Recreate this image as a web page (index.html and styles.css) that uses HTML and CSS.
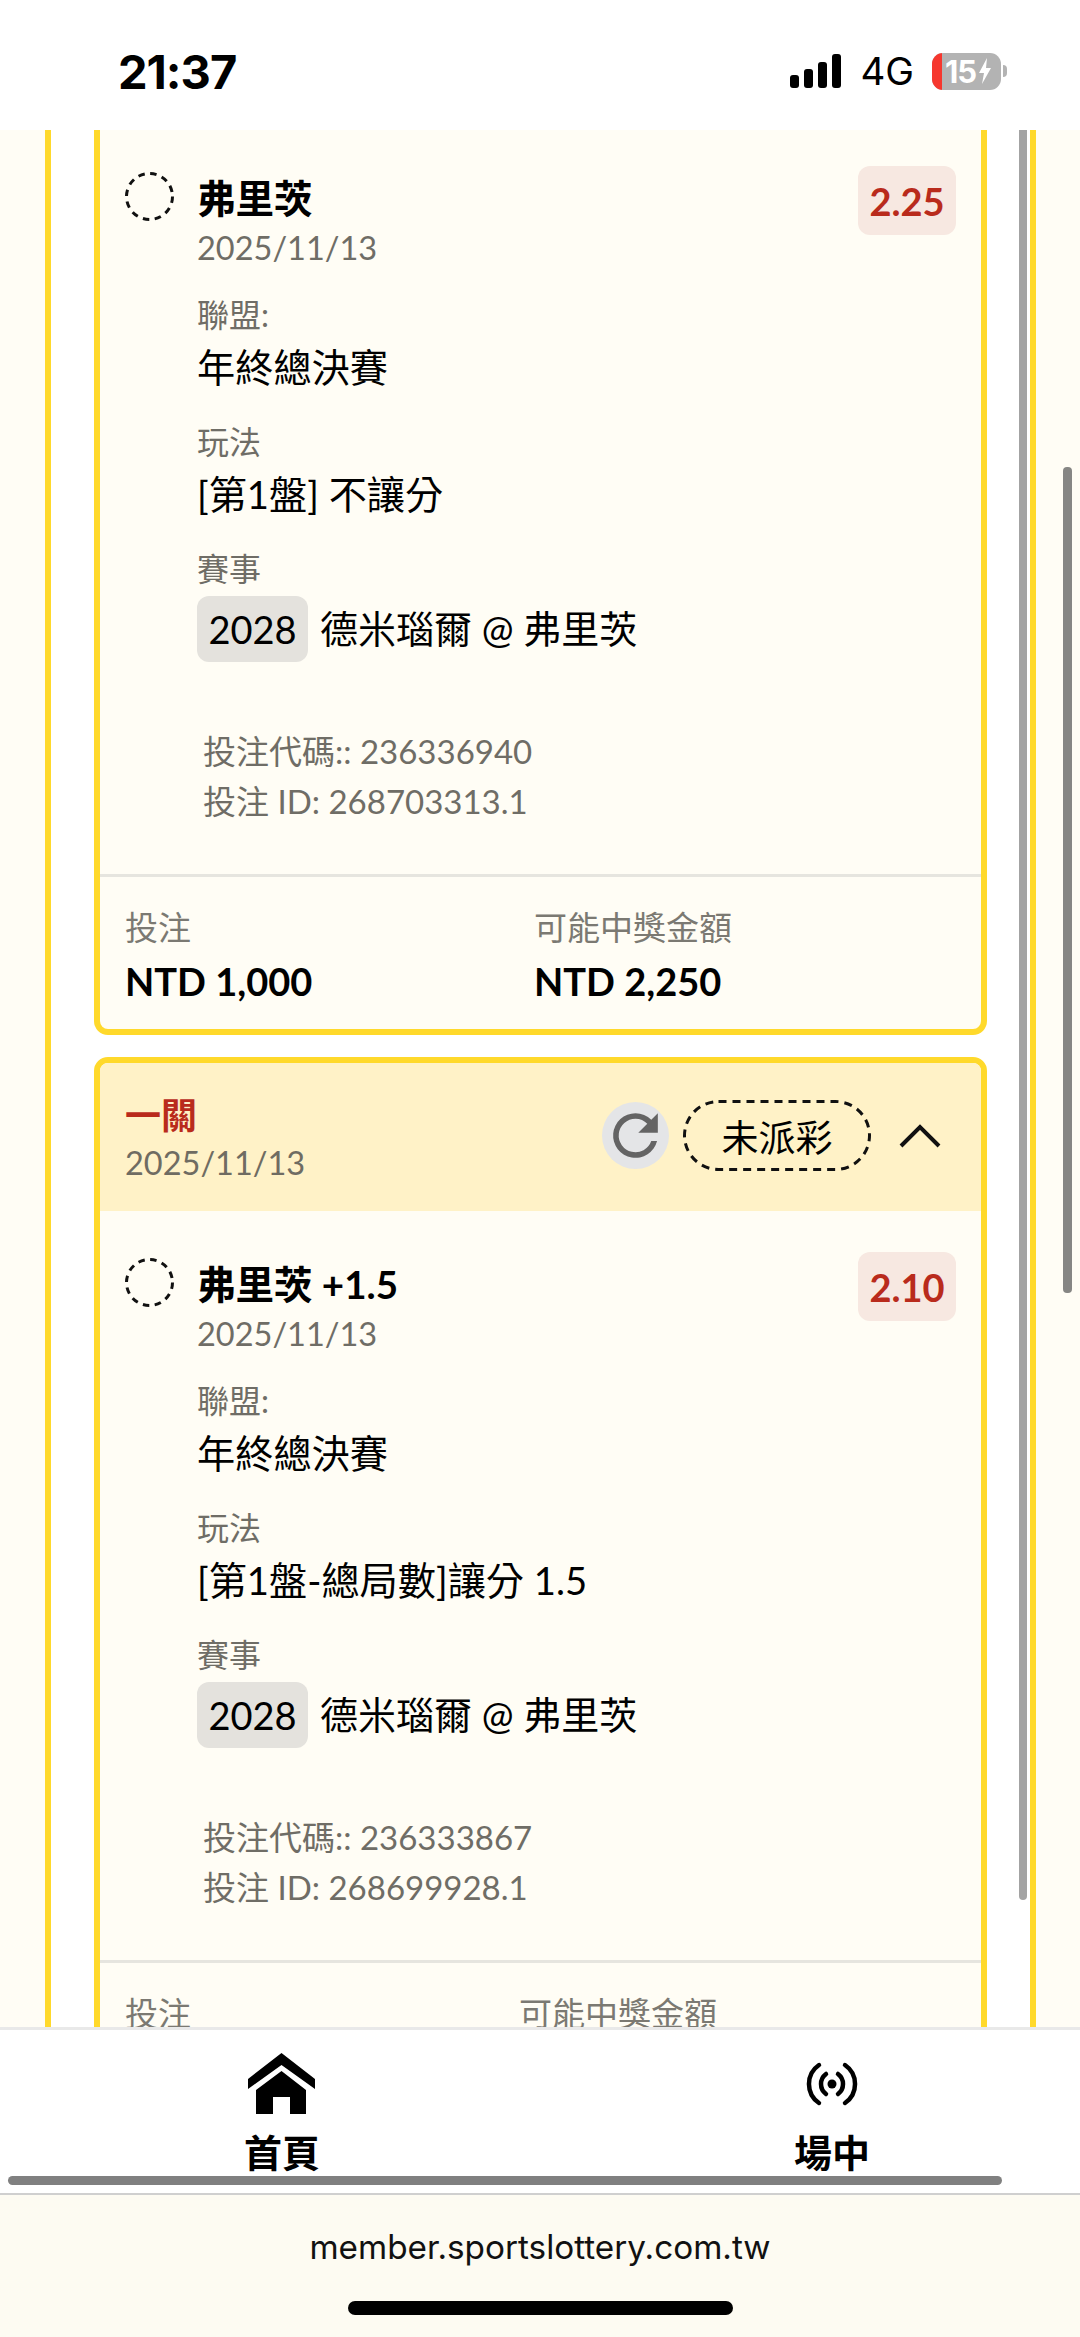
FILE: index.html
```html
<!DOCTYPE html>
<html lang="zh-Hant">
<head>
<meta charset="utf-8">
<title>member.sportslottery.com.tw</title>
<link rel="stylesheet" href="styles.css">
</head>
<body>
<div class="screen">
  <header class="status">
    <span class="time">21:37</span>
    <div class="status-right">
      <div class="signal"><i class="s1"></i><i class="s2"></i><i class="s3"></i><i class="s4"></i></div>
      <span class="net">4G</span>
      <div class="battery">
        <div class="batt-body">
          <span class="batt-red"></span>
          <span class="batt-num">15</span>
          <svg class="bolt" viewBox="0 0 14 26"><path d="M9 0 1 15h5l-2 11 9-16H8z" fill="#fff"/></svg>
        </div>
        <span class="batt-nub"></span>
      </div>
    </div>
  </header>

  <main class="viewport">
    <div class="panel">
      <section class="card card-cut">
        <div class="body body-first">
          <div class="sel">
            <svg class="ring" viewBox="0 0 49 49" width="49" height="49"><circle cx="24.5" cy="24.5" r="23" fill="none" stroke="#111" stroke-width="3" stroke-dasharray="6.5 5.54"/></svg>
            <div class="sel-text">
              <div class="team">弗里茨</div>
              <div class="date">2025/11/13</div>
            </div>
            <span class="odds">2.25</span>
          </div>
          <div class="fields">
            <div class="label">聯盟:</div>
            <div class="value">年終總決賽</div>
            <div class="label">玩法</div>
            <div class="value">[第1盤] 不讓分</div>
            <div class="label">賽事</div>
            <div class="match"><span class="tag">2028</span><span class="match-name">德米瑙爾 @ 弗里茨</span></div>
          </div>
          <div class="ids">
            <div>投注代碼:: 236336940</div>
            <div>投注 ID: 268703313.1</div>
          </div>
        </div>
        <div class="foot foot-a">
          <div><div class="foot-label">投注</div><div class="foot-val">NTD 1,000</div></div>
          <div><div class="foot-label">可能中獎金額</div><div class="foot-val">NTD 2,250</div></div>
        </div>
      </section>

      <section class="card">
        <div class="card-head">
          <div class="head-left">
            <div class="head-title">一關</div>
            <div class="head-date">2025/11/13</div>
          </div>
          <div class="head-right">
            <span class="refresh">
              <svg viewBox="0 0 24 24" width="67" height="67"><path fill="#646464" d="M17.65 6.35A7.96 7.96 0 0 0 12 4a8 8 0 1 0 7.73 10h-2.08A6 6 0 1 1 12 6c1.66 0 3.14.69 4.22 1.78L13 11h7V4z"/></svg>
            </span>
            <span class="pill">
              <svg class="pill-line" viewBox="0 0 188 71" width="188" height="71"><rect x="1.5" y="1.5" width="185" height="68" rx="34" fill="none" stroke="#111" stroke-width="3" stroke-dasharray="8 6"/></svg>
              未派彩
            </span>
            <svg class="chev" viewBox="0 0 42 24" width="42" height="24"><path d="M2 22 21 3l19 19" fill="none" stroke="#111" stroke-width="4"/></svg>
          </div>
        </div>
        <div class="body">
          <div class="sel">
            <svg class="ring" viewBox="0 0 49 49" width="49" height="49"><circle cx="24.5" cy="24.5" r="23" fill="none" stroke="#111" stroke-width="3" stroke-dasharray="6.5 5.54"/></svg>
            <div class="sel-text">
              <div class="team">弗里茨 +1.5</div>
              <div class="date">2025/11/13</div>
            </div>
            <span class="odds">2.10</span>
          </div>
          <div class="fields">
            <div class="label">聯盟:</div>
            <div class="value">年終總決賽</div>
            <div class="label">玩法</div>
            <div class="value">[第1盤-總局數]讓分 1.5</div>
            <div class="label">賽事</div>
            <div class="match"><span class="tag">2028</span><span class="match-name">德米瑙爾 @ 弗里茨</span></div>
          </div>
          <div class="ids">
            <div>投注代碼:: 236333867</div>
            <div>投注 ID: 268699928.1</div>
          </div>
        </div>
        <div class="foot foot-b">
          <div><div class="foot-label">投注</div></div>
          <div><div class="foot-label">可能中獎金額</div></div>
        </div>
      </section>
    </div>
    <span class="scroll-inner"></span>
    <span class="scroll-outer"></span>
  </main>

  <nav class="nav">
    <div class="nav-items">
      <a class="nav-item">
        <svg class="nav-icon" viewBox="0 0 68 61" width="68" height="61"><path fill="#000" d="M33.5 0 67 26v10L33.5 12 0 36V26z"/><path fill="#000" d="M33.5 18 58 37v24H42V44H25v17H8V37z"/></svg>
        <span class="nav-label">首頁</span>
      </a>
      <a class="nav-item">
        <svg class="nav-icon" viewBox="0 0 68 61" width="68" height="61"><circle cx="34" cy="31" r="4.5" fill="#000"/><path fill="none" stroke="#000" stroke-width="4.5" stroke-linecap="round" d="M21 12A23 23 0 0 0 21 50M47 12A23 23 0 0 1 47 50M28 21A12.5 12.5 0 0 0 28 41M40 21A12.5 12.5 0 0 1 40 41"/></svg>
        <span class="nav-label">場中</span>
      </a>
    </div>
    <div class="hbar-row"><span class="hbar"></span></div>
  </nav>

  <footer class="browser">
    <div class="url">member.sportslottery.com.tw</div>
    <span class="home-ind"></span>
  </footer>
</div>
</body>
</html>
```

FILE: styles.css
```css
* { box-sizing: border-box; }
html, body { margin: 0; padding: 0; }
body { background: #fffdf5; font-family: Lato, "Noto Sans CJK TC", sans-serif; color: #000; }
.screen { width: 1080px; height: 2337px; display: flex; flex-direction: column; overflow: hidden; }

.status { height: 130px; flex: none; background: #fff; display: flex; justify-content: space-between; align-items: center; padding: 0 73px 0 118px; font-family: Inter, sans-serif; }
.time { font-size: 47px; font-weight: 700; letter-spacing: -1px; line-height: 1; margin-top: 12px; }
.status-right { display: flex; align-items: center; margin-top: 12px; }
.signal { display: flex; align-items: flex-end; gap: 5px; height: 34px; }
.signal i { display: block; width: 9px; background: #000; border-radius: 3px; }
.s1 { height: 13px; } .s2 { height: 19px; } .s3 { height: 26px; } .s4 { height: 34px; }
.net { font-size: 38.5px; font-weight: 400; margin-left: 19px; line-height: 1; }
.battery { display: flex; align-items: center; margin-left: 18px; }
.batt-body { width: 69px; height: 37px; background: #b3b3b3; border-radius: 11px; display: flex; align-items: center; overflow: hidden; color: #fff; }
.batt-red { width: 10px; height: 100%; background: #f6372e; }
.batt-num { font-size: 31px; font-weight: 700; line-height: 1; margin-left: 3px; letter-spacing: -1px; }
.bolt { width: 14px; height: 26px; margin-left: 2px; }
.batt-nub { width: 4px; height: 12px; margin-left: 2px; background: #b3b3b3; border-radius: 0 4px 4px 0; }

.viewport { flex: 1; min-height: 0; position: relative; overflow: hidden; }
.panel { width: 991px; margin-left: 45px; min-height: 100%; background: #fff; border: solid #ffd92b; border-width: 0 6px; padding: 0 43px; }
.card { background: #fffdf5; border: 6px solid #ffd92b; border-radius: 14px; margin-bottom: 22px; overflow: hidden; }
.card-cut { border-top: 0; border-radius: 0 0 14px 14px; }

.card-head { height: 148px; background: #fff2c7; display: flex; justify-content: space-between; align-items: center; padding: 0 40px 0 25px; }
.head-left { margin-top: 2px; }
.head-title { font-size: 36px; font-weight: 700; color: #b92b1c; line-height: 50px; }
.head-date { font-size: 32.5px; color: #6f6c62; line-height: 46px; }
.head-right { display: flex; align-items: center; margin-top: -3px; }
.refresh { width: 67px; height: 67px; border-radius: 50%; background: #e4e5e7; display: flex; align-items: center; justify-content: center; }
.pill { position: relative; height: 71px; width: 188px; margin-left: 14px; border-radius: 36px; display: flex; align-items: center; justify-content: center; font-size: 37px; }
.pill-line { position: absolute; left: 0; top: 0; }
.chev { margin-left: 28px; }

.body { padding: 41px 25px 0 25px; }
.body-first { padding-top: 36px; }
.sel { display: flex; align-items: flex-start; }
.ring { margin-top: 6px; flex: none; }
.sel-text { flex: 1; margin-left: 23px; padding-top: 9px; }
.team { font-size: 38.5px; font-weight: 700; line-height: 46px; }
.date { font-size: 32.5px; color: #6f6d66; line-height: 46px; margin-top: 4px; }
.odds { width: 98px; height: 69px; background: #f7e8e1; border-radius: 12px; color: #b92b1c; font-size: 38px; font-weight: 700; display: flex; align-items: center; justify-content: center; }

.fields { margin-left: 72px; margin-top: 24px; }
.label { font-size: 32px; color: #6f6d66; line-height: 40px; }
.value { font-size: 38.2px; line-height: 54px; margin-top: 5px; margin-bottom: 28px; }
.match { display: flex; align-items: center; margin-top: 7px; }
.tag { width: 111px; height: 66px; background: #e4e2dd; border-radius: 12px; font-size: 38px; display: flex; align-items: center; justify-content: center; }
.match-name { font-size: 38px; margin-left: 12px; margin-top: -6px; }

.ids { margin: 64px 0 0 78px; font-size: 33px; color: #6f6d66; line-height: 50px; }
.foot { border-top: 3px solid #e6e5df; margin-top: 48px; padding: 28px 25px 0; display: grid; height: 155px; }
.foot-a { grid-template-columns: 409px 1fr; }
.foot-b { grid-template-columns: 394px 1fr; }
.foot-label { font-size: 33px; color: #7b7972; line-height: 44px; }
.foot-val { font-size: 38px; font-weight: 700; line-height: 52px; margin-top: 6px; }

.scroll-outer { position: absolute; left: 1019px; top: 0; width: 8px; height: 1770px; background: #a3a3a3; border-radius: 0 0 4px 4px; }
.scroll-inner { position: absolute; left: 1063px; top: 337px; width: 9px; height: 826px; background: #868684; border-radius: 4px; }

.nav { height: 168px; flex: none; background: #fff; border-top: 3px solid #e9e9e9; border-bottom: 2px solid #cfcfcf; display: flex; flex-direction: column; }
.nav-items { flex: 1; display: grid; grid-template-columns: 550px 550px; margin-left: 7px; padding-top: 23px; }
.nav-item { display: flex; flex-direction: column; align-items: center; }
.nav-label { font-size: 38px; font-weight: 700; line-height: 48px; margin-top: 14px; }
.hbar-row { padding: 0 78px 8px 8px; }
.hbar { display: block; height: 9px; background: #808080; border-radius: 5px; }

.browser { flex: none; height: 142px; background: #fdfbf2; display: flex; flex-direction: column; align-items: center; }
.url { font-family: Inter, sans-serif; font-size: 33.3px; margin-top: 30px; line-height: 44px; color: #111; }
.home-ind { display: block; width: 385px; height: 14px; background: #000; border-radius: 7px; margin-top: 32px; }
```
